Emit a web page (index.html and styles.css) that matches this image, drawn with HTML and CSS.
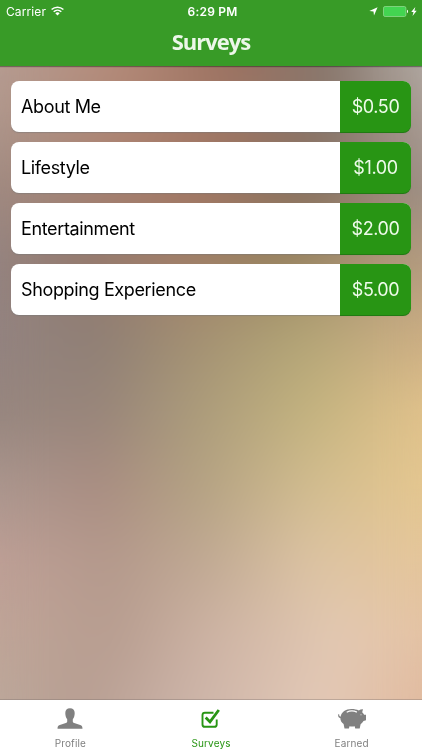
FILE: index.html
```html
<!DOCTYPE html>
<html lang="en">
<head>
    <meta charset="UTF-8">
    <meta name="viewport" content="width=device-width, initial-scale=1.0">
    <title>Surveys</title>
    <link rel="stylesheet" href="styles.css">
</head>
<body>
    <div class="backdrop">
        <div class="band band-1"></div>
        <div class="band band-2"></div>
        <div class="band band-3"></div>
        <div class="band band-4"></div>
        <div class="band band-5"></div>
        <div class="band band-6"></div>
        <div class="band band-7"></div>
        <div class="band band-8"></div>
        <div class="band band-9"></div>
        <div class="band band-10"></div>
    </div>

    <header class="header">
        <div class="status-bar">
            <div class="status-left">
                <span class="carrier">Carrier</span>
                <svg width="13" height="10" viewBox="0 0 13 10" fill="none" stroke="#fff" stroke-width="1.5">
                    <path d="M.6 3.5a8.6 8.6 0 0 1 11.8 0M2.7 5.7a5.6 5.6 0 0 1 7.6 0"/>
                    <path d="M6.5 9.6 4.3 7.3a3.2 3.2 0 0 1 4.4 0z" fill="#fff" stroke="none"/>
                </svg>
            </div>
            <span class="time">6:29 PM</span>
            <div class="status-right">
                <svg width="9" height="9" viewBox="0 0 9 9" fill="#fff">
                    <path d="M8.6.3 5 8.6 4.5 4.5.3 4z"/>
                </svg>
                <svg class="battery" width="26" height="11" viewBox="0 0 26 11">
                    <rect x=".5" y=".5" width="22.4" height="10" rx="1.6" fill="#43d551" stroke="#8fd98c" stroke-width=".8"/>
                    <path d="M24 3.8c1.4.3 1.4 3.1 0 3.4z" fill="#fff"/>
                </svg>
                <svg width="6" height="9" viewBox="0 0 6 9" fill="#fff">
                    <path d="M4.3 0 .2 5h2.3L1.5 9l4.200-5.200H3.400z"/>
                </svg>
            </div>
        </div>
        <h1 class="title">Surveys</h1>
    </header>

    <main class="survey-list">
        <a class="card">
            <span class="name">About Me</span>
            <span class="price">$0.50</span>
        </a>
        <a class="card">
            <span class="name">Lifestyle</span>
            <span class="price">$1.00</span>
        </a>
        <a class="card">
            <span class="name">Entertainment</span>
            <span class="price">$2.00</span>
        </a>
        <a class="card">
            <span class="name">Shopping Experience</span>
            <span class="price">$5.00</span>
        </a>
    </main>

    <nav class="tab-bar">
        <a class="tab">
            <svg width="30" height="24" viewBox="0 0 30 24" fill="currentColor">
                <path d="M15 1.200c-3 0-4.700 2-4.700 4.800 0 2.600.6 4.700 1.900 6.200v2.300c0 .8-.6 1.200-1.400 1.500l-6 2.100C3 18.700 2.600 19.600 2.500 21.800h25c-.1-2.200-.5-3.100-2.300-3.700l-6-2.100c-.8-.3-1.400-.7-1.400-1.500v-2.300c1.300-1.500 1.900-3.600 1.900-6.200 0-2.800-1.700-4.800-4.700-4.800z"/>
            </svg>
            <span>Profile</span>
        </a>
        <a class="tab active">
            <svg width="30" height="24" viewBox="0 0 30 24" fill="none" stroke="currentColor">
                <path d="M17.500 5.700H8.900Q6.500 5.700 6.500 8.100v9.300q0 2.400 2.400 2.400h9.400q2.400 0 2.400-2.400v-5" stroke-width="1.900"/>
                <path d="m9.700 10.500 4.300 4.400L22.800 3" stroke-width="2.800"/>
            </svg>
            <span>Surveys</span>
        </a>
        <a class="tab">
            <svg width="30" height="24" viewBox="0 0 30 24">
                <path fill="currentColor" d="M14.500 2c3 0 5.300.5 7.300 1.500 1.200-.9 2.500-1.300 4.200-1.200l-.8 3c.9.800 1.500 1.500 1.900 2.400H29v5.500l-2.500.8c-.8 1.400-1.700 2.400-2.900 3.200l-.9 4.300h-4.500l-.5-2.300c-1.800.3-3.500.3-5.200 0l-.6 2.300H7.500l-.9-4.400c-2.100-1.400-3.200-3.400-3.300-6C1.800 10.800.8 9.500 1.200 7.200l1 .1c-.1 1.400.3 2.100 1.400 2.400C4.500 4.900 8.600 2 14.500 2z"/>
                <path d="M9.700 5.300c3.200-1.700 6.700-1.800 10.200-.2" fill="none" stroke="#fff" stroke-width="1.300"/>
                <circle cx="24" cy="7.700" r=".5" fill="#fff"/>
            </svg>
            <span>Earned</span>
        </a>
    </nav>
</body>
</html>
```

FILE: styles.css
```css
* {
    box-sizing: border-box;
}
body {
    position: relative;
    display: flex;
    flex-direction: column;
    height: 750px;
    margin: 0;
    overflow: hidden;
    background-color: #b09a8c;
    font-family: Inter, "Liberation Sans", sans-serif;
}

/* Soft photo-like background, each band fades in over the one above */
.backdrop {
    position: absolute;
    inset: 0;
    z-index: -1;
    overflow: hidden;
}
.backdrop::after {
    content: "";
    position: absolute;
    inset: 0;
    backdrop-filter: blur(20px);
}
.band {
    height: 150px;
    margin-top: -75px;
    -webkit-mask-image: linear-gradient(transparent, #000 75px);
    mask-image: linear-gradient(transparent, #000 75px);
}
.band:first-child {
    height: 112px;
    margin-top: 0;
    -webkit-mask-image: none;
    mask-image: none;
}
.band-1 { background: linear-gradient(90deg, #b89e94 0, #b48b7a 120px, #9c7060 230px, #87776d 330px, #b6b0aa 422px); }
.band-2 { background: linear-gradient(90deg, #b0988d 0, #b08674 120px, #9d7563 230px, #87766b 330px, #ab9f97 422px); }
.band-3 { background: linear-gradient(90deg, #a08a81 0, #a68070 110px, #a17663 200px, #877060 310px, #9f9086 422px); }
.band-4 { background: linear-gradient(90deg, #958480 0, #92796e 80px, #a17e69 180px, #98845f 280px, #b49c80 422px); }
.band-5 { background: linear-gradient(90deg, #938380 0, #8f7f75 100px, #a28f72 190px, #b2a476 300px, #ccae84 422px); }
.band-6 { background: linear-gradient(90deg, #97867f 0, #98857a 100px, #ac9c7b 200px, #c3b37f 310px, #e1c28c 422px); }
.band-7 { background: linear-gradient(90deg, #ab968e 0, #a98d82 100px, #b4a283 200px, #d1bc8f 310px, #e5c790 422px); }
.band-8 { background: linear-gradient(90deg, #be9f96 0, #b4998c 110px, #c1aa94 210px, #dcc3a3 310px, #e5c69b 422px); }
.band-9 { background: linear-gradient(90deg, #bfa598 0, #b79d90 110px, #cdb3a4 210px, #e3c9b3 340px, #e4c2a4 422px); }
.band-10 { background: linear-gradient(90deg, #bca89b 0, #b79e92 80px, #cab2a7 180px, #e3c9b7 320px, #e0b99e 422px); }

.header {
    height: 66px;
    background-color: #389b27;
    color: #fff;
    box-shadow: 0 1px 1px rgba(0, 0, 0, 0.35);
}
.status-bar {
    display: grid;
    grid-template-columns: 1fr auto 1fr;
    align-items: center;
    height: 22px;
    padding: 0 5px 0 6px;
    font-size: 12px;
}
.status-left, .status-right {
    display: flex;
    align-items: center;
}
.status-left {
    gap: 5px;
}
.status-right {
    justify-content: flex-end;
    gap: 5px;
}
.battery {
    margin-right: -3px;
}
.carrier {
    letter-spacing: 0.1px;
}
.time {
    padding-left: 2px;
    font-weight: 600;
    letter-spacing: 0.2px;
}
.title {
    margin: 0;
    color: #ecf7e9;
    font-family: "Open Sans", "Noto Sans", sans-serif;
    font-size: 22px;
    font-weight: 700;
    letter-spacing: -1px;
    line-height: 39px;
    text-align: center;
}

.survey-list {
    flex: 1;
    display: flex;
    flex-direction: column;
    gap: 10px;
    padding: 15px 11px 0;
}
.card {
    display: flex;
    height: 51px;
    border-radius: 8px;
    background-color: #fff;
    box-shadow: 0 1px 1px rgba(120, 120, 120, 0.5);
}
.name {
    flex: 1;
    padding-left: 10px;
    color: #000;
    font-size: 18px;
    letter-spacing: -0.36px;
    line-height: 52px;
}
.price {
    width: 71px;
    border-radius: 0 8px 8px 0;
    background-color: #289514;
    box-shadow: 0 1px 0 #217a12;
    color: #eefbea;
    font-size: 18px;
    letter-spacing: -0.4px;
    line-height: 52px;
    text-align: center;
}

.tab-bar {
    display: flex;
    height: 50px;
    background-color: #fff;
    box-shadow: 0 -1px 0 rgba(120, 110, 105, 0.35);
}
.tab {
    flex: 1;
    display: flex;
    flex-direction: column;
    align-items: center;
    padding-top: 7px;
    color: #808080;
    font-size: 10px;
}
.tab span {
    margin-top: 6px;
    line-height: 12px;
    letter-spacing: 0.15px;
}
.tab.active {
    color: #289514;
}
```
